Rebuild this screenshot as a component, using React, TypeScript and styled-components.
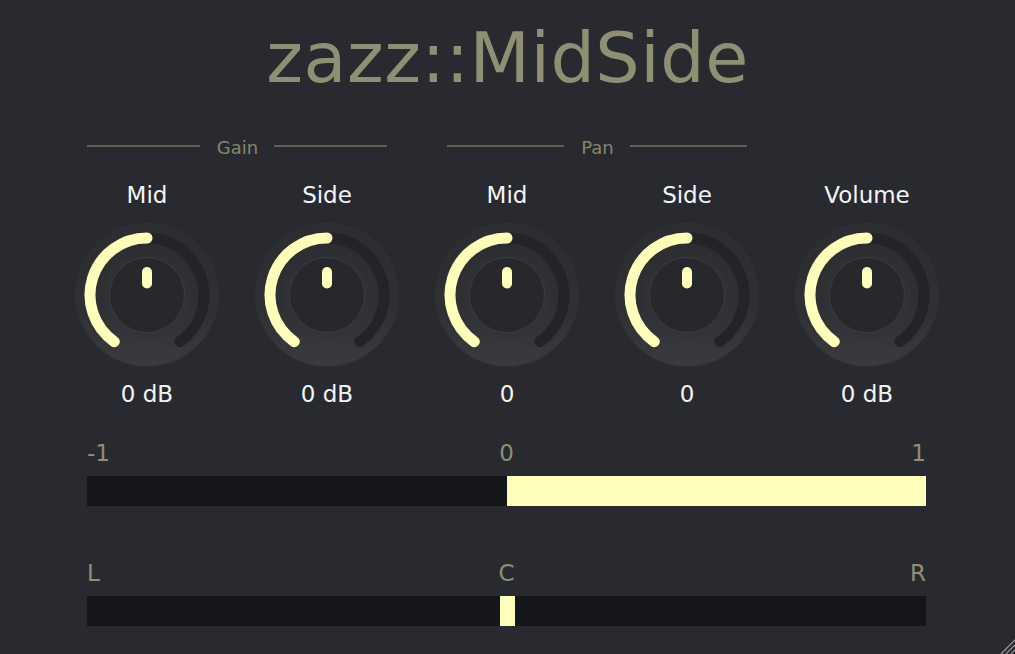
import React from 'react'
import styled, { createGlobalStyle } from 'styled-components'

const YELLOW = '#ffffbb'
const OLIVE = '#8f8f74'

const GlobalStyle = createGlobalStyle`
  html, body {
    margin: 0;
    padding: 0;
    background: #292a2f;
  }
  body {
    font-family: "DejaVu Sans", Verdana, sans-serif;
    overflow: hidden;
  }
`

const knobs = [
  { label: 'Mid', value: '0 dB' },
  { label: 'Side', value: '0 dB' },
  { label: 'Mid', value: '0' },
  { label: 'Side', value: '0' },
  { label: 'Volume', value: '0 dB' },
]

// angle in degrees, 0 = top, clockwise
const pt = (r: number, a: number) => {
  const rad = (a * Math.PI) / 180
  return [72 + r * Math.sin(rad), 72 - r * Math.cos(rad)]
}

const arc = (r: number, from: number, to: number) => {
  const [x1, y1] = pt(r, from)
  const [x2, y2] = pt(r, to)
  const large = to - from > 180 ? 1 : 0
  return `M ${x1} ${y1} A ${r} ${r} 0 ${large} 1 ${x2} ${y2}`
}

const Knob = () => (
  <KnobSvg width="144" height="144" viewBox="0 0 144 144">
    <defs>
      <linearGradient id="knobBody" x1="0" y1="0" x2="0" y2="1">
        <stop offset="0" stopColor="#2c2d31" />
        <stop offset="0.6" stopColor="#2f3034" />
        <stop offset="1" stopColor="#3a3b3f" />
      </linearGradient>
      <linearGradient id="knobRing" x1="0" y1="0" x2="0" y2="1">
        <stop offset="0" stopColor="#2e2f33" />
        <stop offset="1" stopColor="#333438" />
      </linearGradient>
    </defs>
    <circle cx="72" cy="72" r="71.5" fill="url(#knobBody)" stroke="#313236" strokeWidth="1" />
    <path d={arc(57, -145, 145)} fill="none" stroke="#232428" strokeWidth="11" strokeLinecap="round" />
    <path d={arc(57, -145, 0)} fill="none" stroke={YELLOW} strokeWidth="11" strokeLinecap="round" />
    <circle cx="72" cy="72" r="43.5" fill="url(#knobRing)" />
    <circle cx="72" cy="72" r="37.5" fill="#27282c" stroke="#3b3c40" strokeWidth="1" />
    <rect x="67" y="44" width="10" height="21.5" rx="5" fill={YELLOW} />
  </KnobSvg>
)

const App = () => {
  return (
    <Page>
      <GlobalStyle />
      <Title>zazz::MidSide</Title>
      <Grid>
        <Section $col={1}>
          <Rule />
          <SectionName>Gain</SectionName>
          <Rule />
        </Section>
        <Section $col={3}>
          <Rule />
          <SectionName>Pan</SectionName>
          <Rule />
        </Section>
      </Grid>
      <Grid>
        {knobs.map((k, i) => (
          <KnobCol key={i}>
            <KnobLabel>{k.label}</KnobLabel>
            <Knob />
            <KnobValue>{k.value}</KnobValue>
          </KnobCol>
        ))}
      </Grid>
      <Meters>
        <Meter $gap={31}>
          <Scale>
            <ScaleText $align="start">-1</ScaleText>
            <ScaleText $align="center">0</ScaleText>
            <ScaleText $align="end">1</ScaleText>
          </Scale>
          <Bar>
            <BarHalf />
            <BarFill />
          </Bar>
        </Meter>
        <Meter $gap={53}>
          <Scale>
            <ScaleText $align="start">L</ScaleText>
            <ScaleText $align="center">C</ScaleText>
            <ScaleText $align="end">R</ScaleText>
          </Scale>
          <Bar>
            <PanMarker />
          </Bar>
        </Meter>
      </Meters>
      <Grip width="16" height="16" viewBox="0 0 16 16">
        <path d="M16 2 L2 16 M16 7 L7 16 M16 12 L12 16" stroke="#9a9a9a" strokeWidth="1.2" />
      </Grip>
    </Page>
  )
}

export default App

const Page = styled.div`
  position: relative;
  width: 1015px;
  height: 654px;
  background: #292a2f;
  overflow: hidden;
`

const Title = styled.h1`
  margin: 18px 0 0;
  font-family: "DejaVu Sans", Verdana, sans-serif;
  font-weight: normal;
  font-size: 70px;
  letter-spacing: 0.5px;
  line-height: 80px;
  color: ${OLIVE};
  text-align: center;
`

const Grid = styled.div`
  display: grid;
  grid-template-columns: repeat(5, 180px);
  margin-left: 57px;
`

const Section = styled.div<{ $col: number }>`
  grid-column: ${(p) => p.$col} / span 2;
  margin: 38px 30px 0;
  display: flex;
  align-items: center;
  height: 24px;
`

const Rule = styled.div`
  flex: 1;
  height: 2px;
  margin-bottom: 4px;
  background: #5f5f55;
`

const SectionName = styled.span`
  margin: 0 16px 0 17px;
  font-size: 18px;
  line-height: 24px;
  color: #85856c;
`

const KnobCol = styled.div`
  display: flex;
  flex-direction: column;
  align-items: center;
  margin-top: 21px;
`

const KnobLabel = styled.div`
  font-size: 23px;
  line-height: 28px;
  color: #f4f4f4;
`

const KnobSvg = styled.svg`
  display: block;
  margin-top: 14px;
`

const KnobValue = styled.div`
  margin-top: 13px;
  font-size: 23px;
  line-height: 28px;
  color: #f4f4f4;
`

const Meters = styled.div`
  padding: 0 89px 0 87px;
`

const Meter = styled.div<{ $gap: number }>`
  margin-top: ${(p) => p.$gap}px;
  display: flex;
  flex-direction: column;
  gap: 9px;
`

const Scale = styled.div`
  display: grid;
  grid-template-columns: 1fr auto 1fr;
`

const ScaleText = styled.span<{ $align: string }>`
  justify-self: ${(p) => p.$align};
  font-size: 23px;
  line-height: 28px;
  color: ${OLIVE};
`

const Bar = styled.div`
  position: relative;
  display: flex;
  height: 30px;
  background: #151619;
`

const BarHalf = styled.div`
  width: 420px;
`

const BarFill = styled.div`
  flex: 1;
  background: ${YELLOW};
`

const PanMarker = styled.div`
  position: absolute;
  left: 413px;
  top: 0;
  width: 15px;
  height: 100%;
  background: ${YELLOW};
`

const Grip = styled.svg`
  position: absolute;
  right: 0;
  bottom: 0;
`
